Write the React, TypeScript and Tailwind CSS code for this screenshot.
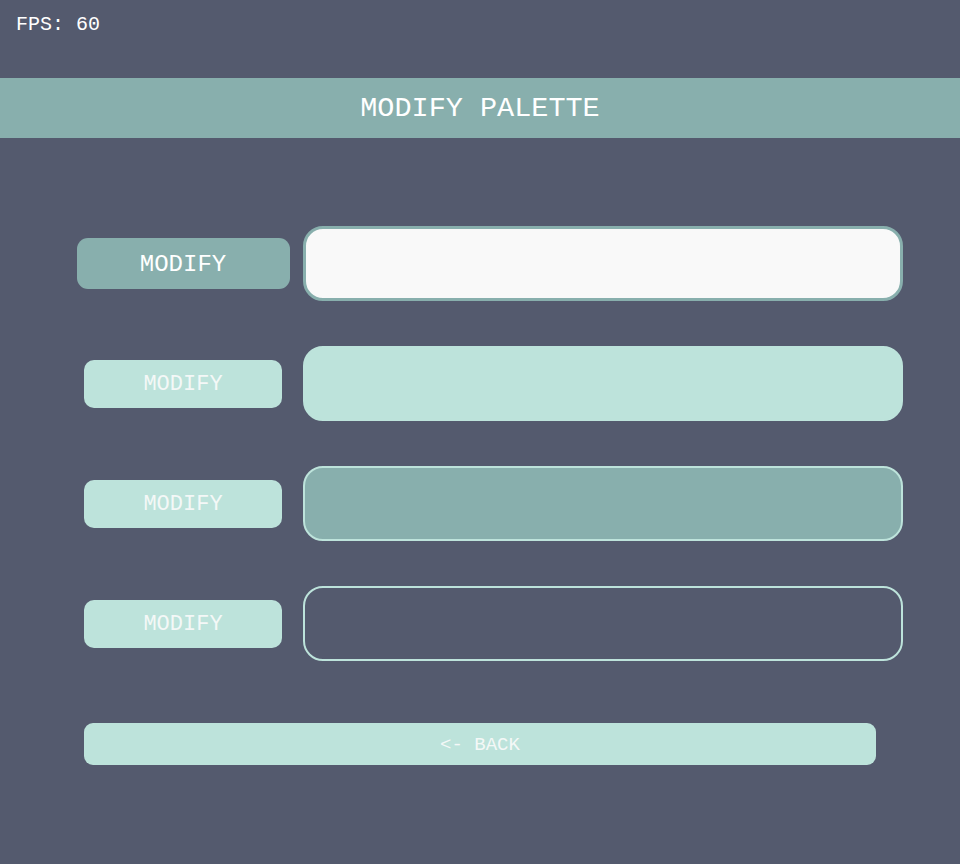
const ROWS = [
  { key: 'primary', active: true, field: 'bg-[#f9f9f9] border-[3px] border-[#88afad]' },
  { key: 'secondary', active: false, field: 'bg-[#bde3db] border-[2px] border-[#bde3db]' },
  { key: 'accent', active: false, field: 'bg-[#88afad] border-[2px] border-[#bde3db]' },
  { key: 'background', active: false, field: 'bg-transparent border-[2px] border-[#bde3db]' },
]

const mono = "font-['Liberation_Mono','DejaVu_Sans_Mono',monospace]"

export default function App() {
  return (
    <div className={`w-[960px] h-[864px] bg-[#545a6e] text-white overflow-hidden ${mono}`}>
      {/* fps counter */}
      <div className="h-[78px] pl-[16px] pt-[13px] text-[20px] leading-[24px]">FPS: 60</div>

      {/* title bar */}
      <div className="h-[60px] pt-[3px] bg-[#88afad] flex items-center justify-center text-[28.5px]">
        MODIFY PALETTE
      </div>

      <div className="pt-[88px] pl-[76px] flex flex-col gap-[45px]">
        {ROWS.map((row) => (
          <div key={row.key} className="flex items-center">
            <div className="w-[214px] flex items-center justify-center">
              {row.active ? (
                <button className="w-[213px] h-[51px] pt-[2px] rounded-[11px] bg-[#88afad] text-[24px] text-white">
                  MODIFY
                </button>
              ) : (
                <button className="w-[198px] h-[48px] pt-[2px] rounded-[10px] bg-[#bde3db] text-[22px] text-[#f4f8f7]">
                  MODIFY
                </button>
              )}
            </div>
            <div className={`ml-[13px] w-[600px] h-[75px] rounded-[20px] ${row.field}`} />
          </div>
        ))}

        {/* back */}
        <div className="pt-[17px] pl-[8px]">
          <button className="w-[792px] h-[42px] pt-[2px] rounded-[9px] bg-[#bde3db] text-[19px] text-[#f4f8f7] flex items-center justify-center">
            &lt;- BACK
          </button>
        </div>
      </div>
    </div>
  )
}
